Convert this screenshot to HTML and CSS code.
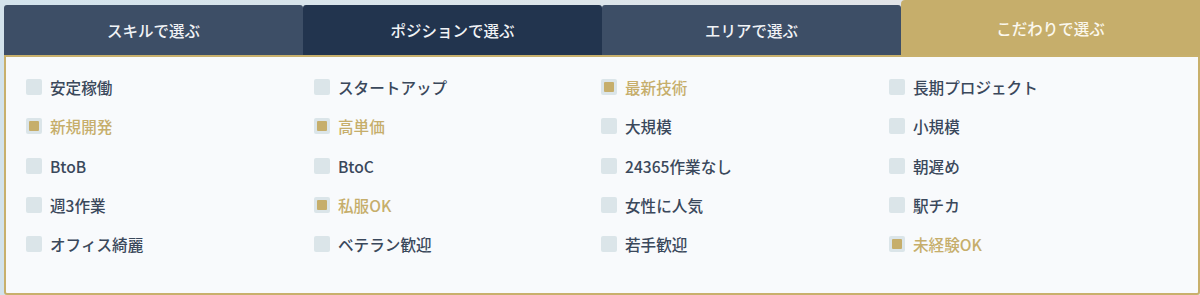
FILE: index.html
```html
<!DOCTYPE html>
<html lang="ja">
<head>
<meta charset="utf-8">
<link rel="stylesheet" href="styles.css">
</head>
<body>
<div class="wrap">
  <div class="tabs">
    <div class="tab tab-a">スキルで選ぶ</div>
    <div class="tab tab-b">ポジションで選ぶ</div>
    <div class="tab tab-a">エリアで選ぶ</div>
    <div class="tab tab-active">こだわりで選ぶ</div>
  </div>
  <div class="panel">
    <div class="grid">
      <label class="item"><span class="box"></span>安定稼働</label>
      <label class="item"><span class="box"></span>スタートアップ</label>
      <label class="item on"><span class="box"></span>最新技術</label>
      <label class="item"><span class="box"></span>長期プロジェクト</label>

      <label class="item on"><span class="box"></span>新規開発</label>
      <label class="item on"><span class="box"></span>高単価</label>
      <label class="item"><span class="box"></span>大規模</label>
      <label class="item"><span class="box"></span>小規模</label>

      <label class="item"><span class="box"></span>BtoB</label>
      <label class="item"><span class="box"></span>BtoC</label>
      <label class="item"><span class="box"></span>24365作業なし</label>
      <label class="item"><span class="box"></span>朝遅め</label>

      <label class="item"><span class="box"></span>週3作業</label>
      <label class="item on"><span class="box"></span>私服OK</label>
      <label class="item"><span class="box"></span>女性に人気</label>
      <label class="item"><span class="box"></span>駅チカ</label>

      <label class="item"><span class="box"></span>オフィス綺麗</label>
      <label class="item"><span class="box"></span>ベテラン歓迎</label>
      <label class="item"><span class="box"></span>若手歓迎</label>
      <label class="item on"><span class="box"></span>未経験OK</label>
    </div>
  </div>
</div>
</body>
</html>
```
FILE: styles.css
```css
html, body {
  margin: 0;
  padding: 0;
}
body {
  width: 1200px;
  height: 295px;
  background: linear-gradient(90deg, #d3e3ec 0%, #dde5ea 50%, #e6e3e6 100%);
  font-family: "Noto Sans CJK JP", "Noto Sans", sans-serif;
  overflow: hidden;
}
.wrap {
  padding-left: 4px;
  display: flex;
  flex-direction: column;
}
.tabs {
  display: flex;
  align-items: flex-end;
  height: 55px;
}
.tab {
  flex: 0 0 299px;
  height: 50px;
  display: flex;
  align-items: center;
  justify-content: center;
  color: #f1f3f6;
  font-size: 15.5px;
  font-weight: 500;
  border-radius: 3px 3px 0 0;
  box-sizing: border-box;
}
.tab-a { background: #3d4e66; }
.tab-b { background: #22344e; }
.tab-active {
  background: #c6ae6b;
  height: 55px;
  flex: 1 1 auto;
  border-radius: 4px 0 0 0;
  color: #fbf8ee;
}
.panel {
  height: 240px;
  box-sizing: border-box;
  border: 2px solid #c8b06c;
  background: #f8fafc;
  border-radius: 0 0 3px 3px;
  padding: 18px 0 0 20px;
}
.grid {
  display: grid;
  grid-template-columns: 288px 287px 288px 288px;
  grid-auto-rows: 39.3px;
}
.item {
  display: flex;
  align-items: center;
  gap: 8px;
  font-size: 15.6px;
  font-weight: 500;
  color: #3a485b;
  height: 24px;
}
.box {
  width: 16px;
  height: 16px;
  border-radius: 2px;
  background: #dbe5e9;
  display: flex;
  align-items: center;
  justify-content: center;
  flex: 0 0 16px;
}
.item.on { color: #c6ae6b; }
.item.on .box::after {
  content: "";
  width: 10px;
  height: 10px;
  border-radius: 1px;
  background: #c6ae6b;
}
```
